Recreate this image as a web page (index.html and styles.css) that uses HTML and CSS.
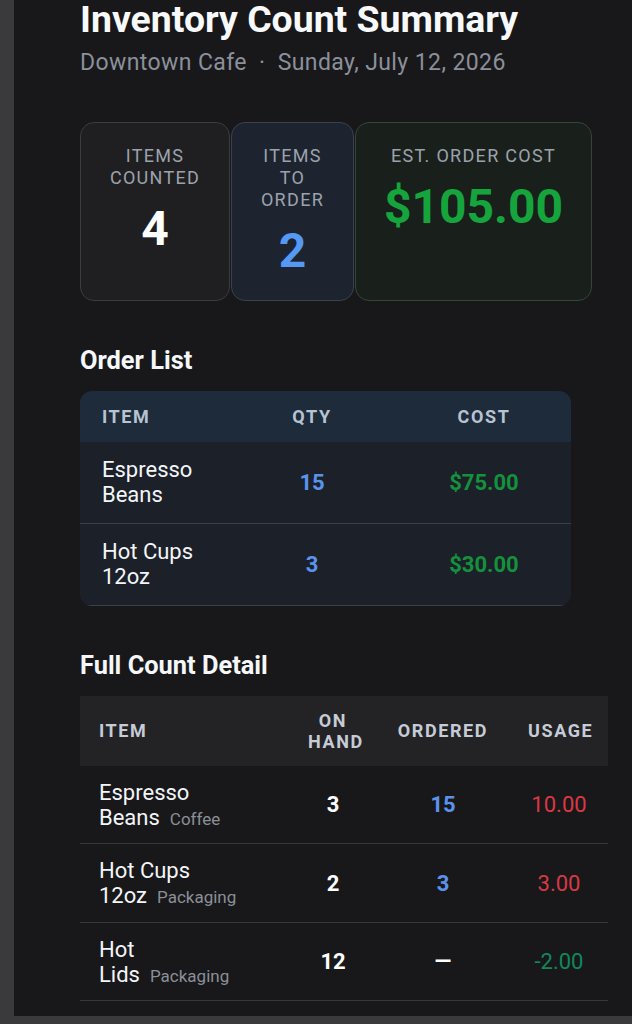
FILE: index.html
```html
<!DOCTYPE html>
<html lang="en">
<head>
  <meta charset="UTF-8" />
  <meta name="viewport" content="width=device-width, initial-scale=1.0" />
  <title>Inventory Count Summary</title>
  <link rel="stylesheet" href="styles.css">
</head>
<body>
  <div class="panel">
    <h1>Inventory Count Summary</h1>
    <p class="sub">Downtown Cafe &nbsp;·&nbsp; Sunday, July 12, 2026</p>

    <div class="stats">
      <div class="stat">
        <div class="stat-label">Items counted</div>
        <div class="stat-value">4</div>
      </div>
      <div class="stat stat-blue">
        <div class="stat-label">Items to order</div>
        <div class="stat-value">2</div>
      </div>
      <div class="stat stat-green">
        <div class="stat-label">Est. order cost</div>
        <div class="stat-value">$105.00</div>
      </div>
    </div>

    <h2>Order List</h2>
    <div class="order-wrap">
      <table class="order">
        <colgroup>
          <col style="width:147px">
          <col style="width:170px">
          <col style="width:174px">
        </colgroup>
        <thead>
          <tr><th class="left">Item</th><th>Qty</th><th>Cost</th></tr>
        </thead>
        <tbody>
          <tr><td class="left">Espresso Beans</td><td class="qty">15</td><td class="cost">$75.00</td></tr>
          <tr><td class="left">Hot Cups 12oz</td><td class="qty">3</td><td class="cost">$30.00</td></tr>
        </tbody>
      </table>
    </div>

    <h2>Full Count Detail</h2>
    <table class="detail">
      <colgroup>
        <col style="width:210px">
        <col style="width:86px">
        <col style="width:134px">
        <col style="width:98px">
      </colgroup>
      <thead>
        <tr><th class="left">Item</th><th>On<br>hand</th><th>Ordered</th><th>Usage</th></tr>
      </thead>
      <tbody>
        <tr>
          <td class="left"><span class="name">Espresso<br>Beans</span><span class="cat">Coffee</span></td>
          <td class="num">3</td>
          <td class="qty">15</td>
          <td class="use up">10.00</td>
        </tr>
        <tr>
          <td class="left"><span class="name">Hot Cups<br>12oz</span><span class="cat">Packaging</span></td>
          <td class="num">2</td>
          <td class="qty">3</td>
          <td class="use up">3.00</td>
        </tr>
        <tr>
          <td class="left"><span class="name">Hot<br>Lids</span><span class="cat">Packaging</span></td>
          <td class="num">12</td>
          <td class="num">—</td>
          <td class="use down">-2.00</td>
        </tr>
      </tbody>
    </table>
  </div>
</body>
</html>
```

FILE: styles.css
```css
body {
  margin: 0;
  background: #3a3a3c;
  font-family: Roboto, "Liberation Sans", sans-serif;
  color: #f3f5f8;
}
.panel {
  margin-left: 14px;
  background: #18181a;
  padding: 0 24px 15px 66px;
}
h1 {
  margin: 0 0 10px;
  font-size: 37.4px;
  line-height: 1.05;
  font-weight: 700;
  color: #f7f9fb;
}
.sub {
  margin: 0;
  font-size: 23px;
  letter-spacing: 0.4px;
  color: #8b909a;
}
.stats {
  display: grid;
  grid-template-columns: 150px 123px 237px;
  gap: 1px;
  margin-top: 46px;
}
.stat {
  background: #1f1f21;
  border: 1px solid #3c3c3f;
  border-radius: 14px;
  padding: 22px 22px 20px;
  text-align: center;
}
.stat-blue {
  background: #1d2430;
  border-color: #3a424e;
}
.stat-green {
  background: #19201c;
  border-color: #34463a;
}
.stat-label {
  font-size: 18px;
  line-height: 22px;
  letter-spacing: 1.3px;
  text-transform: uppercase;
  color: #9ca2ac;
}
.stat-value {
  margin-top: 11px;
  font-size: 48px;
  line-height: 1.2;
  font-weight: 700;
  color: #ffffff;
}
.stat-blue .stat-value {
  color: #5599f4;
}
.stat-green .stat-value {
  color: #16a43c;
}
h2 {
  margin: 44px 0 16px;
  font-size: 25.4px;
  font-weight: 700;
  color: #f5f7fa;
}
table {
  border-collapse: collapse;
  table-layout: fixed;
}
th {
  font-size: 18px;
  font-weight: 700;
  letter-spacing: 1.6px;
  text-transform: uppercase;
  text-align: center;
}
td {
  font-size: 22px;
  text-align: center;
}
.left {
  text-align: left;
}
.order-wrap {
  width: 491px;
  border-radius: 12px;
  overflow: hidden;
  background: #1c2029;
}
.order {
  width: 491px;
}
.order th {
  background: #1d2b3b;
  color: #b8c3d2;
  padding: 15px 22px;
}
.order td {
  padding: 15.5px 22px;
  border-bottom: 1px solid #3b414a;
}
.qty {
  font-weight: 700;
  color: #5b93ec;
}
.cost {
  font-weight: 700;
  color: #14913d;
}
.detail {
  width: 528px;
}
.detail th {
  background: #232325;
  color: #c6ccd7;
  padding: 14px 18px;
}
.detail td {
  padding: 13.75px 18px;
  border-bottom: 1px solid #38383b;
}
.detail th.left,
.detail td.left {
  padding-left: 19px;
}
.cat {
  margin-left: 10px;
  font-size: 17px;
  color: #8a8f98;
}
.num {
  font-weight: 700;
  color: #ffffff;
}
.use.up {
  color: #d93844;
}
.use.down {
  color: #10885a;
}
```
